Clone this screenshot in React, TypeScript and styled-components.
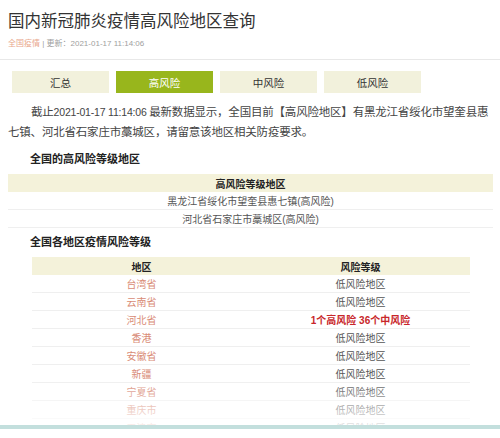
import React from 'react';
import styled, { createGlobalStyle } from 'styled-components';

const GlobalStyle = createGlobalStyle`
  body {
    margin: 0;
    background: #fff;
    font-family: "Liberation Sans", "Noto Sans CJK SC", sans-serif;
  }
`;

const Page = styled.div`
  position: relative;
  width: 500px;
  height: 438px;
  overflow: hidden;
  background: #fff;
`;

const Header = styled.div`
  padding: 10px 0 9px 8px;
  border-bottom: 1px solid #e8e8e8;
`;

const Title = styled.h1`
  margin: 0;
  font-size: 16.5px;
  line-height: 22px;
  font-weight: 400;
  color: #333;
`;

const Meta = styled.div`
  margin-top: 6px;
  font-size: 8px;
  line-height: 12px;
  color: #a0a0a0;
`;

const Source = styled.span`
  color: #e9a78c;
`;

const Tabs = styled.div`
  display: flex;
  gap: 7px;
  margin: 11px 0 0 12px;
`;

const Tab = styled.div<{ $active?: boolean }>`
  width: 97px;
  height: 22px;
  display: flex;
  align-items: center;
  justify-content: center;
  font-size: 10.5px;
  background: ${(p) => (p.$active ? '#98b61c' : '#f2f1dc')};
  color: ${(p) => (p.$active ? '#fff' : '#333')};
`;

const Intro = styled.p`
  margin: 9px 0 0;
  padding: 0 4px 0 8px;
  font-size: 11.5px;
  line-height: 20px;
  letter-spacing: -0.2px;
  text-indent: 2em;
  color: #444;
`;

const Stamp = styled.span`
  font-size: 10.5px;
`;

const SectionTitle = styled.h2`
  margin: 0;
  padding-left: 30px;
  font-size: 11px;
  line-height: 18px;
  font-weight: 700;
  color: #222;
`;

const FirstTitle = styled(SectionTitle)`
  margin-top: 8px;
`;

const SecondTitle = styled(SectionTitle)`
  margin-top: 5px;
`;

const Table = styled.table<{ $inset: number; $width: number }>`
  margin: 6px 0 0 ${(p) => p.$inset}px;
  width: ${(p) => p.$width}px;
  border-collapse: collapse;
  font-size: 10px;
  color: #555;
  table-layout: fixed;
`;

const Th = styled.th`
  height: 18px;
  padding: 0;
  background: #f4f2da;
  color: #222;
  font-weight: 700;
  text-align: center;
`;

const Td = styled.td<{ $tone?: 'region' | 'alert' }>`
  height: 17px;
  padding: 0;
  text-align: center;
  border-bottom: 1px solid #efefef;
  color: ${(p) => (p.$tone === 'region' ? '#d98b76' : p.$tone === 'alert' ? '#c8262a' : '#555')};
  font-weight: ${(p) => (p.$tone === 'alert' ? 700 : 400)};
`;

const Fade = styled.div`
  position: absolute;
  left: 0;
  right: 0;
  top: 378px;
  height: 48px;
  background: linear-gradient(rgba(255, 255, 255, 0), rgba(255, 255, 255, 0.85));
`;

const BottomBar = styled.div`
  position: absolute;
  left: 0;
  right: 0;
  top: 425px;
  bottom: 0;
  background: #fff;
  border-top: 4px solid #c3dfdd;
`;

const highAreas = ['黑龙江省绥化市望奎县惠七镇(高风险)', '河北省石家庄市藁城区(高风险)'];

const regions: [string, string][] = [
  ['台湾省', '低风险地区'],
  ['云南省', '低风险地区'],
  ['河北省', '1个高风险 36个中风险'],
  ['香港', '低风险地区'],
  ['安徽省', '低风险地区'],
  ['新疆', '低风险地区'],
  ['宁夏省', '低风险地区'],
  ['重庆市', '低风险地区'],
  ['天津市', '低风险地区'],
];

const tabs = ['汇总', '高风险', '中风险', '低风险'];

export default function App() {
  return (
    <Page>
      <GlobalStyle />
      <Header>
        <Title>国内新冠肺炎疫情高风险地区查询</Title>
        <Meta>
          <Source>全国疫情</Source> | 更新：2021-01-17 11:14:06
        </Meta>
      </Header>
      <Tabs>
        {tabs.map((t) => (
          <Tab key={t} $active={t === '高风险'}>
            {t}
          </Tab>
        ))}
      </Tabs>
      <Intro>
        截止<Stamp>2021-01-17 11:14:06 </Stamp>最新数据显示，全国目前【高风险地区】有黑龙江省绥化市望奎县惠七镇、河北省石家庄市藁城区，请留意该地区相关防疫要求。
      </Intro>
      <FirstTitle>全国的高风险等级地区</FirstTitle>
      <Table $inset={8} $width={485}>
        <thead>
          <tr>
            <Th>高风险等级地区</Th>
          </tr>
        </thead>
        <tbody>
          {highAreas.map((a) => (
            <tr key={a}>
              <Td>{a}</Td>
            </tr>
          ))}
        </tbody>
      </Table>
      <SecondTitle>全国各地区疫情风险等级</SecondTitle>
      <Table $inset={32} $width={438}>
        <thead>
          <tr>
            <Th>地区</Th>
            <Th>风险等级</Th>
          </tr>
        </thead>
        <tbody>
          {regions.map(([name, level]) => (
            <tr key={name}>
              <Td $tone="region">{name}</Td>
              <Td $tone={level.startsWith('1个') ? 'alert' : undefined}>{level}</Td>
            </tr>
          ))}
        </tbody>
      </Table>
      <Fade />
      <BottomBar />
    </Page>
  );
}
